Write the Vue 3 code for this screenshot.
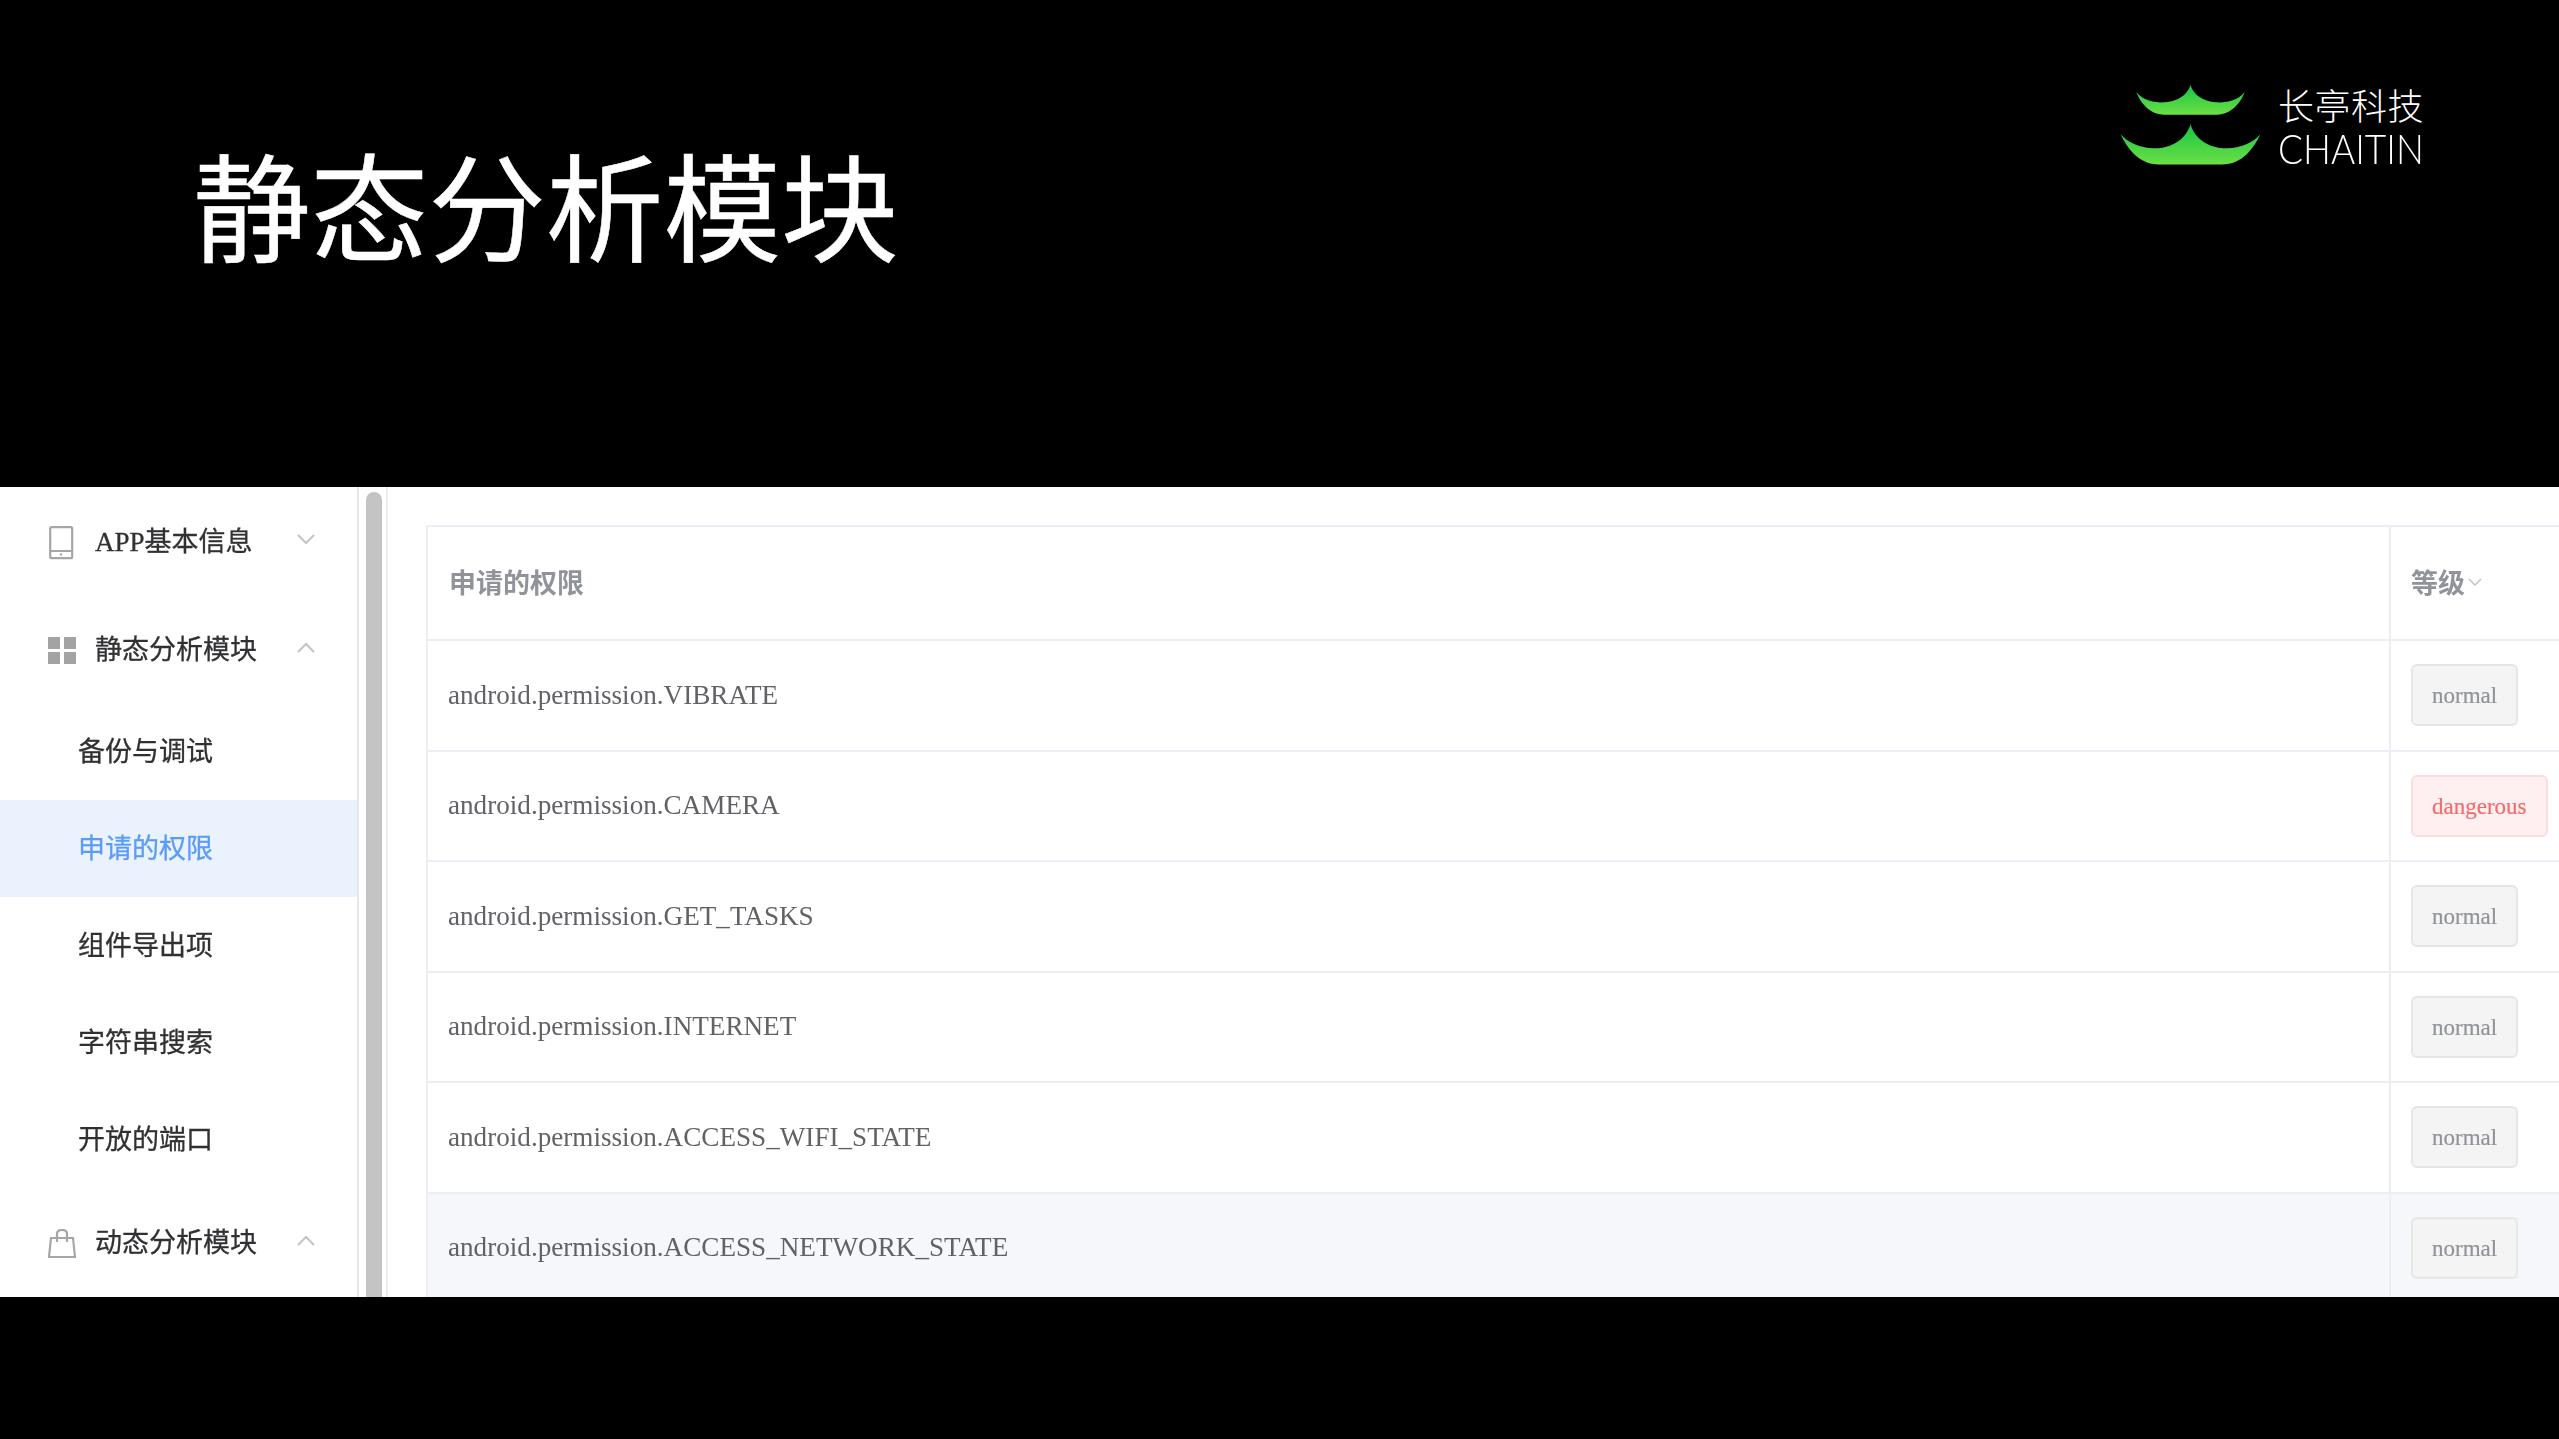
<script setup>
const subs = ['备份与调试', '申请的权限', '组件导出项', '字符串搜索', '开放的端口']
const rows = [
  { name: 'android.permission.VIBRATE', level: 'normal' },
  { name: 'android.permission.CAMERA', level: 'dangerous' },
  { name: 'android.permission.GET_TASKS', level: 'normal' },
  { name: 'android.permission.INTERNET', level: 'normal' },
  { name: 'android.permission.ACCESS_WIFI_STATE', level: 'normal' },
  { name: 'android.permission.ACCESS_NETWORK_STATE', level: 'normal' }
]
</script>

<template>
  <div class="slide">
    <header class="top">
      <h1 class="title">静态分析模块</h1>
      <div class="logo">
        <svg class="mark" viewBox="120 65 430 255" width="143" height="85">
          <defs>
            <linearGradient id="roof" x1="0" y1="0" x2="0" y2="1">
              <stop offset="0" stop-color="#14c645" />
              <stop offset="1" stop-color="#6cdf45" />
            </linearGradient>
          </defs>
          <path fill="url(#roof)" d="M335 72C340 95 365 126 425 126C460 126 485 112 498 95C485 130 455 163 415 163L255 163C215 163 185 130 172 95C185 112 210 126 245 126C305 126 330 95 335 72Z" />
          <path fill="url(#roof)" d="M335 190C340 215 370 264 445 264C490 264 525 245 545 222C525 265 490 313 430 313L240 313C180 313 145 265 125 222C145 245 180 264 225 264C300 264 330 215 335 190Z" />
        </svg>
        <div class="wordmark">
          <span class="cn">长亭科技</span>
          <span class="en">CHAITIN</span>
        </div>
      </div>
    </header>

    <main class="panel">
      <aside class="side">
        <nav class="menu">
          <div class="group">
            <svg class="ico" viewBox="0 0 26 34" width="26" height="34">
              <rect x="1.2" y="1.2" width="22" height="31" rx="1.5" fill="none" stroke="#a6a6a6" stroke-width="2.2" />
              <path d="M1 25H23" stroke="#a6a6a6" stroke-width="2" />
              <circle cx="12" cy="28.5" r="1.2" fill="#a6a6a6" />
            </svg>
            <span class="label">APP基本信息</span>
            <svg class="chev down" viewBox="0 0 20 12" width="20" height="12"><path d="M2 2L10 10L18 2" /></svg>
          </div>
          <div class="group">
            <svg class="ico" viewBox="0 0 28 28" width="28" height="28">
              <path fill="#a3a3a3" d="M0 0H12V12H0ZM16 0H28V12H16ZM0 15H12V27H0ZM16 15H28V27H16Z" />
            </svg>
            <span class="label">静态分析模块</span>
            <svg class="chev up" viewBox="0 0 20 12" width="20" height="12"><path d="M2 10L10 2L18 10" /></svg>
          </div>
          <div v-for="(s, i) in subs" :key="s" class="sub" :class="{ active: i === 1 }">{{ s }}</div>
          <div class="group">
            <svg class="ico" viewBox="0 0 28 30" width="28" height="30">
              <path fill="none" stroke="#a6a6a6" stroke-width="2.2" d="M3 9H25L27 28H1ZM9 13V5C9 2.5 11 1 14 1C17 1 19 2.5 19 5V13" />
            </svg>
            <span class="label">动态分析模块</span>
            <svg class="chev up" viewBox="0 0 20 12" width="20" height="12"><path d="M2 10L10 2L18 10" /></svg>
          </div>
        </nav>
        <div class="track"><div class="thumb"></div></div>
      </aside>

      <section class="content">
        <div class="table">
          <div class="row head">
            <div class="c1">申请的权限</div>
            <div class="c2">等级<svg class="mini" viewBox="0 0 14 8" width="14" height="8"><path d="M1 1L7 7L13 1" /></svg></div>
          </div>
          <div v-for="(r, i) in rows" :key="r.name" class="row" :class="{ hover: i === rows.length - 1 }">
            <div class="c1">{{ r.name }}</div>
            <div class="c2"><span class="tag" :class="r.level">{{ r.level }}</span></div>
          </div>
        </div>
      </section>
    </main>
  </div>
</template>

<style>
html, body { margin: 0; background: #000; overflow: hidden; }
</style>

<style scoped>
.slide {
  width: 2559px;
  height: 1439px;
  background: #000;
  overflow: hidden;
  font-family: "Liberation Serif", "Noto Sans CJK SC", serif;
}
.top {
  height: 487px;
  display: flex;
  justify-content: space-between;
  align-items: flex-start;
  padding: 0 135px 0 193px;
  box-sizing: border-box;
}
.title {
  margin: 132px 0 0;
  color: #fff;
  font: 400 117.6px/1.2 "Noto Sans CJK SC", sans-serif;
  -webkit-text-stroke: 0.5px #fff;
  white-space: nowrap;
}
.logo {
  margin-top: 82px;
  display: flex;
  align-items: flex-start;
  gap: 16px;
}
.mark { display: block; }
.wordmark {
  display: flex;
  flex-direction: column;
  color: #fff;
  font-family: "Noto Sans CJK SC", sans-serif;
  font-weight: 300;
  width: 146px;
}
.cn { padding-top: 2px; font-size: 36px; line-height: 40px; letter-spacing: 0.5px; white-space: nowrap; }
.en {
  margin-top: 7px;
  font-family: "Lato", sans-serif;
  font-weight: 300;
  font-size: 37px;
  line-height: 34px;
  white-space: nowrap;
  transform: scaleY(1.12);
  transform-origin: 0 50%;
}

.panel {
  height: 810px;
  background: #fff;
  display: flex;
  overflow: hidden;
  filter: blur(0.5px);
}
.side {
  flex: none;
  width: 388px;
  display: flex;
}
.menu {
  width: 357px;
  flex: none;
}
.group {
  height: 108px;
  display: flex;
  align-items: center;
  padding-left: 48px;
  box-sizing: border-box;
  font-size: 27px;
  color: #303133;
  -webkit-text-stroke: 0.3px #303133;
}
.ico { flex: none; width: 28px; display: block; margin-top: 3px; }
.label { margin: 0 0 4px 19px; flex: 1; white-space: nowrap; }
.chev {
  flex: none;
  margin-right: 41px;
  fill: none;
  stroke: #c0c4cc;
  stroke-width: 2;
}
.chev.down { margin-top: -5px; }
.chev.up { margin-top: -2px; }
.sub {
  height: 97px;
  line-height: 96px;
  padding: 1px 0 0 78px;
  box-sizing: border-box;
  font-size: 27px;
  color: #303133;
  -webkit-text-stroke: 0.3px #303133;
}
.sub.active {
  background: #e9f2fd;
  color: #5b9cf8;
  -webkit-text-stroke: 0.3px #5b9cf8;
}
.track {
  flex: 1;
  border-left: 2px solid #e6e6e6;
  border-right: 2px solid #ededed;
  padding-left: 7px;
  box-sizing: border-box;
}
.thumb {
  width: 16px;
  height: 100%;
  margin-top: 5px;
  background: #c4c4c4;
  border-radius: 8px 8px 0 0;
}
.content {
  flex: 1;
  min-width: 0;
  padding: 38px 0 0 38px;
  overflow: hidden;
}
.table {
  border-top: 2px solid #ebeef5;
  border-left: 2px solid #ebeef5;
  width: 2300px;
}
.row {
  display: grid;
  grid-template-columns: 1961px 1fr;
  height: 110.5px;
  box-sizing: border-box;
  border-bottom: 2px solid #ebeef5;
  font-size: 27.15px;
  color: #606266;
}
.row.head {
  height: 114px;
  font-size: 27px;
  font-weight: 700;
  color: #909399;
}
.row.hover { background: #f5f7fa; }
.c1, .c2 {
  display: flex;
  align-items: center;
  box-sizing: border-box;
  white-space: nowrap;
}
.c1 { padding-left: 20px; }
.head .c1 { padding: 0 0 3px 21px; }
.c2 { border-left: 2px solid #ebeef5; padding-left: 20px; }
.head .c2 { padding-bottom: 3px; }
.mini {
  margin-left: 3px;
  fill: none;
  stroke: #c0c4cc;
  stroke-width: 1.5;
}
.tag {
  box-sizing: border-box;
  height: 62px;
  line-height: 60px;
  padding: 0 19px;
  border-radius: 6px;
  font-size: 23px;
  border: 2px solid #e6e6e8;
  background: #f4f4f5;
  color: #909399;
  -webkit-text-stroke: 0.2px #909399;
}
.tag.dangerous {
  background: #fef0f0;
  border-color: #fddcdc;
  color: #f56c6c;
  -webkit-text-stroke: 0.2px #f56c6c;
}
</style>
